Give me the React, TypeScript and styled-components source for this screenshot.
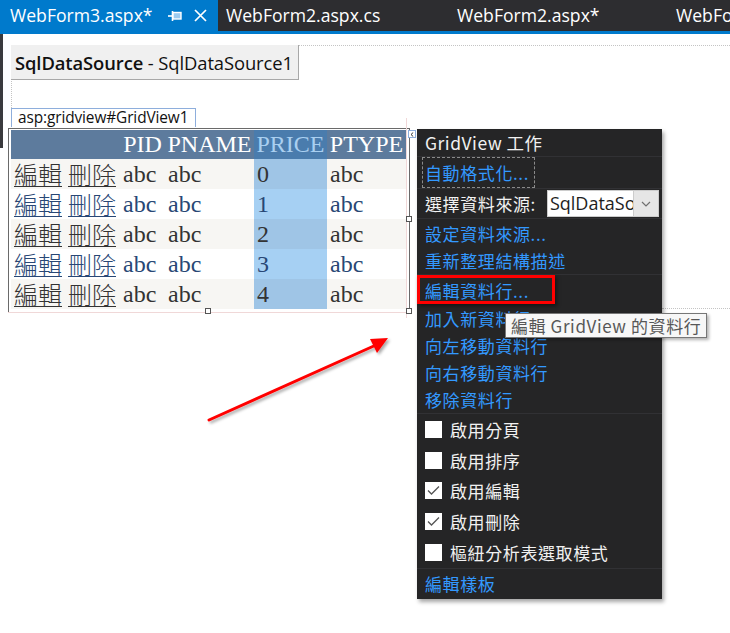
import React from "react";
import styled, { createGlobalStyle } from "styled-components";

const GlobalStyle = createGlobalStyle`
  html, body { margin: 0; padding: 0; background: #ffffff; }
  body { width: 730px; height: 633px; overflow: hidden; font-family: "Noto Sans", "Noto Sans CJK TC", sans-serif; }
`;

const Page = styled.div`
  position: relative;
  width: 730px;
  height: 633px;
  overflow: hidden;
  background: #ffffff;
  display: flex;
  flex-direction: column;
`;

const TabBar = styled.div`
  height: 31px;
  flex-shrink: 0;
  background: #2d2d30;
  border-bottom: 3px solid #007acc;
  display: flex;
`;

const Tab = styled.div<{ $active?: boolean; $width: number; $pad: number }>`
  width: ${(p) => p.$width}px;
  flex-shrink: 0;
  box-sizing: border-box;
  padding-left: ${(p) => p.$pad}px;
  display: flex;
  align-items: center;
  background: ${(p) => (p.$active ? "#007acc" : "transparent")};
  color: #ffffff;
  font-family: "Open Sans", "Noto Sans", sans-serif;
  font-size: 17.6px;
  white-space: nowrap;
  overflow: hidden;
`;

const TabTitle = styled.span`
  line-height: 31px;
`;

const TabIcon = styled.svg<{ $ml: number }>`
  margin-left: ${(p) => p.$ml}px;
  flex-shrink: 0;
`;

const Surface = styled.div`
  flex: 1;
  display: flex;
  flex-direction: column;
  align-items: flex-start;
  position: relative;
`;

const EdgeStrip = styled.div`
  position: absolute;
  left: 0;
  top: 0;
  width: 3px;
  height: 114px;
  background: #3a3a3d;
`;

const DesignArea = styled.div`
  margin: 11px 0 0 11px;
  width: 718px;
  height: 62px;
  border-top: 1px dotted #c4c4c4;
  border-left: 1px dotted #c4c4c4;
`;

const DataSourceBox = styled.div`
  margin: -1px 0 0 -1px;
  width: 288px;
  height: 35px;
  box-sizing: border-box;
  background: #f0f0f0;
  border-right: 1px solid #a8a8a8;
  border-bottom: 1px solid #a8a8a8;
  padding-left: 4px;
  display: flex;
  align-items: center;
  font-family: "Open Sans", "Noto Sans", sans-serif;
  font-size: 18.4px;
  letter-spacing: -0.1px;
  color: #111;
  white-space: nowrap;
`;

const Bold = styled.b`
  font-weight: 600;
`;

const GridTag = styled.div`
  margin-left: 11px;
  width: 185px;
  height: 19px;
  box-sizing: border-box;
  border: 1px solid #8eaedc;
  border-bottom: none;
  background: #ffffff;
  padding-left: 6px;
  font-family: "Open Sans", "Noto Sans", sans-serif;
  font-size: 15.4px;
  line-height: 18px;
  letter-spacing: -0.1px;
  color: #111;
  white-space: nowrap;
`;

const GridFrame = styled.div`
  margin: 1px 0 0 8px;
  width: 402px;
  height: 185px;
  box-sizing: border-box;
  border: 1px solid #6a6a6a;
  padding: 1px 2px 0 2px;
`;

const Table = styled.table`
  border-collapse: collapse;
  width: 395px;
  table-layout: fixed;
  font-family: "Liberation Serif", "Noto Sans CJK TC", serif;
  font-size: 24px;
`;

const HeadCell = styled.th<{ $sel?: boolean }>`
  height: 29px;
  padding: 0;
  font-weight: 400;
  color: ${(p) => (p.$sel ? "#a9cff0" : "#ffffff")};
  background: ${(p) => (p.$sel ? "#4a7cad" : "#5d7b9d")};
  text-align: center;
  line-height: 29px;
  white-space: nowrap;
  overflow: hidden;
`;

const Row = styled.tr<{ $alt?: boolean }>`
  background: ${(p) => (p.$alt ? "#ffffff" : "#f7f6f3")};
  color: ${(p) => (p.$alt ? "#284775" : "#333333")};
`;

const Cell = styled.td<{ $sel?: boolean; $alt?: boolean }>`
  padding: 0;
  background: ${(p) => (p.$sel ? (p.$alt ? "#a6d0f3" : "#9fc5e6") : "transparent")};
`;

const CellBox = styled.div`
  height: 30px;
  padding-left: 3px;
  display: flex;
  align-items: center;
  gap: 6px;
  white-space: nowrap;
  overflow: hidden;
`;

const CmdLink = styled.span`
  display: block;
  height: 28px;
  text-decoration: underline;
  text-decoration-thickness: 1px;
  text-underline-offset: 2px;
  font-family: "Noto Sans CJK TC", sans-serif;
  font-weight: 300;
  line-height: 28px;
`;

const Panel = styled.div`
  position: absolute;
  left: 417px;
  top: 129px;
  width: 245px;
  height: 470px;
  box-sizing: border-box;
  background: #252526;
  box-shadow: 2px 3px 4px rgba(0, 0, 0, 0.35);
  font-family: "Noto Sans CJK TC", sans-serif;
  font-size: 17px;
  letter-spacing: 0.6px;
  display: flex;
  flex-direction: column;
`;

const PanelTitle = styled.div`
  height: 27px;
  padding-left: 8px;
  display: flex;
  align-items: center;
  color: #f1f1f1;
  font-size: 17.5px;
  letter-spacing: 0.5px;
  border-bottom: 1px solid #313134;
`;

const Group = styled.div<{ $last?: boolean }>`
  display: flex;
  flex-direction: column;
  border-bottom: ${(p) => (p.$last ? "none" : "1px solid #313134")};
`;

const Item = styled.div<{ $h: number }>`
  height: ${(p) => p.$h}px;
  padding-left: 8px;
  display: flex;
  align-items: center;
  color: #f1f1f1;
  white-space: nowrap;
`;

const LinkText = styled.span<{ $focus?: boolean; $under?: boolean }>`
  color: #3399ff;
  text-decoration: ${(p) => (p.$under ? "underline" : "none")};
  text-underline-offset: 3px;
  outline: ${(p) => (p.$focus ? "1px dashed #8a8a8a" : "none")};
  outline-offset: ${(p) => (p.$focus ? "2px" : "0")};
  padding-right: ${(p) => (p.$focus ? "3px" : "0")};
`;

const Combo = styled.div`
  margin-left: 11px;
  width: 112px;
  height: 27px;
  box-sizing: border-box;
  background: #ffffff;
  border: 1px solid #cccccc;
  display: flex;
  overflow: hidden;
`;

const ComboText = styled.div`
  flex: 1;
  overflow: hidden;
  color: #1e1e1e;
  padding-left: 2px;
  line-height: 25px;
  font-size: 18px;
  letter-spacing: 0;
  font-family: "Open Sans", "Noto Sans", sans-serif;
`;

const ComboButton = styled.div`
  width: 24px;
  flex-shrink: 0;
  background: #e6e6e6;
  border-left: 1px solid #cccccc;
  display: flex;
  align-items: center;
  justify-content: center;
`;

const CheckBox = styled.div`
  width: 17px;
  height: 17px;
  background: #ffffff;
  margin-right: 8px;
  display: flex;
  align-items: center;
  justify-content: center;
  flex-shrink: 0;
`;

const RedBox = styled.div`
  position: absolute;
  left: 417px;
  top: 275px;
  width: 138px;
  height: 29px;
  box-sizing: border-box;
  border: 3px solid #ff0000;
  box-shadow: 2px 2px 4px rgba(0, 0, 0, 0.45);
`;

const Tooltip = styled.div`
  position: absolute;
  left: 505px;
  top: 313px;
  width: 202px;
  height: 25px;
  box-sizing: border-box;
  background: #f7f7f7;
  border: 1px solid #777777;
  box-shadow: 2px 2px 3px rgba(0, 0, 0, 0.3);
  padding-left: 5px;
  display: flex;
  align-items: center;
  font-family: "Noto Sans CJK TC", sans-serif;
  font-size: 17px;
  letter-spacing: 0.6px;
  color: #575757;
  white-space: nowrap;
`;

const Handle = styled.div<{ $x: number; $y: number }>`
  position: absolute;
  left: ${(p) => p.$x - 3}px;
  top: ${(p) => p.$y - 3}px;
  width: 6px;
  height: 6px;
  box-sizing: border-box;
  background: #ffffff;
  border: 1px solid #555555;
`;

const SmartTag = styled.div`
  position: absolute;
  left: 408px;
  top: 130px;
  width: 8px;
  height: 8px;
  box-sizing: border-box;
  background: #ffffff;
  border: 1px solid #8eaedc;
  display: flex;
  align-items: center;
  justify-content: center;
`;

const GuideV = styled.div<{ $x: number; $y: number; $h: number }>`
  position: absolute;
  left: ${(p) => p.$x}px;
  top: ${(p) => p.$y}px;
  width: 1px;
  height: ${(p) => p.$h}px;
  background: #f0d8d8;
`;

const GuideH = styled.div<{ $x: number; $y: number; $w: number; $dotted?: boolean }>`
  position: absolute;
  left: ${(p) => p.$x}px;
  top: ${(p) => p.$y}px;
  width: ${(p) => p.$w}px;
  height: 0;
  border-top: 1px ${(p) => (p.$dotted ? "dotted #c4c4c4" : "solid #f0d8d8")};
`;

const ArrowSvg = styled.svg`
  position: absolute;
  left: 200px;
  top: 325px;
  overflow: visible;
`;

const Check = () => (
  <svg width="13" height="11" viewBox="0 0 13 11">
    <path d="M1 5.5 L4.5 9 L12 1.5" fill="none" stroke="#555" strokeWidth="1.3" />
  </svg>
);

const rows = [0, 1, 2, 3, 4];

export default function App() {
  return (
    <Page>
      <GlobalStyle />
      <TabBar>
        <Tab $active $width={218} $pad={10}>
          <TabTitle>WebForm3.aspx*</TabTitle>
          <TabIcon $ml={15} width="14" height="12" viewBox="0 0 14 12">
            <path d="M0 6 H4" stroke="#fff" strokeWidth="1.6" />
            <path d="M4.5 1 V11" stroke="#fff" strokeWidth="1.6" />
            <rect x="5" y="2.5" width="8" height="6.5" fill="#9ccbf0" stroke="#fff" strokeWidth="1.4" />
          </TabIcon>
          <TabIcon $ml={12} width="13" height="13" viewBox="0 0 13 13">
            <path d="M1 1 L12 12 M12 1 L1 12" stroke="#fff" strokeWidth="1.7" />
          </TabIcon>
        </Tab>
        <Tab $width={231} $pad={8}>
          <TabTitle>WebForm2.aspx.cs</TabTitle>
        </Tab>
        <Tab $width={219} $pad={8}>
          <TabTitle>WebForm2.aspx*</TabTitle>
        </Tab>
        <Tab $width={62} $pad={8}>
          <TabTitle>WebForm1.aspx</TabTitle>
        </Tab>
      </TabBar>
      <Surface>
        <EdgeStrip />
        <DesignArea>
          <DataSourceBox>
            <Bold>SqlDataSource</Bold>&nbsp;- SqlDataSource1
          </DataSourceBox>
        </DesignArea>
        <GridTag>asp:gridview#GridView1</GridTag>
        <GridFrame>
          <Table>
            <colgroup>
              <col style={{ width: 109 }} />
              <col style={{ width: 45 }} />
              <col style={{ width: 89 }} />
              <col style={{ width: 73 }} />
              <col style={{ width: 79 }} />
            </colgroup>
            <thead>
              <tr>
                <HeadCell>&nbsp;</HeadCell>
                <HeadCell>PID</HeadCell>
                <HeadCell>PNAME</HeadCell>
                <HeadCell $sel>PRICE</HeadCell>
                <HeadCell>PTYPE</HeadCell>
              </tr>
            </thead>
            <tbody>
              {rows.map((n) => {
                const alt = n % 2 === 1;
                return (
                  <Row key={n} $alt={alt}>
                    <Cell>
                      <CellBox>
                        <CmdLink>編輯</CmdLink>
                        <CmdLink>刪除</CmdLink>
                      </CellBox>
                    </Cell>
                    <Cell>
                      <CellBox>abc</CellBox>
                    </Cell>
                    <Cell>
                      <CellBox>abc</CellBox>
                    </Cell>
                    <Cell $sel $alt={alt}>
                      <CellBox>{n}</CellBox>
                    </Cell>
                    <Cell>
                      <CellBox>abc</CellBox>
                    </Cell>
                  </Row>
                );
              })}
            </tbody>
          </Table>
        </GridFrame>
      </Surface>

      <GuideV $x={406} $y={118} $h={200} />
      <GuideH $x={8} $y={312} $w={402} />
      <GuideH $x={662} $y={308} $w={68} $dotted />

      <SmartTag>
        <svg width="4" height="5" viewBox="0 0 4 5">
          <path d="M3.2 0.5 L1 2.5 L3.2 4.5" fill="none" stroke="#333" strokeWidth="1" />
        </svg>
      </SmartTag>
      <Handle $x={409} $y={219} />
      <Handle $x={208} $y={311} />
      <Handle $x={409} $y={311} />

      <Panel>
        <PanelTitle>GridView 工作</PanelTitle>
        <Group>
          <Item $h={31}>
            <LinkText $focus>自動格式化...</LinkText>
          </Item>
        </Group>
        <Group>
          <Item $h={29}>
            選擇資料來源:
            <Combo>
              <ComboText>SqlDataSource1</ComboText>
              <ComboButton>
                <svg width="10" height="6" viewBox="0 0 10 6">
                  <path d="M1 1 L5 5 L9 1" fill="none" stroke="#707070" strokeWidth="1.2" />
                </svg>
              </ComboButton>
            </Combo>
          </Item>
        </Group>
        <Group>
          <Item $h={28}>
            <LinkText>設定資料來源...</LinkText>
          </Item>
          <Item $h={27}>
            <LinkText>重新整理結構描述</LinkText>
          </Item>
        </Group>
        <Group>
          <Item $h={30}>
            <LinkText $under>編輯資料行...</LinkText>
          </Item>
          <Item $h={27}>
            <LinkText>加入新資料行</LinkText>
          </Item>
          <Item $h={27}>
            <LinkText>向左移動資料行</LinkText>
          </Item>
          <Item $h={27}>
            <LinkText>向右移動資料行</LinkText>
          </Item>
          <Item $h={27}>
            <LinkText>移除資料行</LinkText>
          </Item>
        </Group>
        <Group>
          <Item $h={31}>
            <CheckBox />
            啟用分頁
          </Item>
          <Item $h={30}>
            <CheckBox />
            啟用排序
          </Item>
          <Item $h={31}>
            <CheckBox>
              <Check />
            </CheckBox>
            啟用編輯
          </Item>
          <Item $h={30}>
            <CheckBox>
              <Check />
            </CheckBox>
            啟用刪除
          </Item>
          <Item $h={32}>
            <CheckBox />
            樞紐分析表選取模式
          </Item>
        </Group>
        <Group $last>
          <Item $h={29}>
            <LinkText>編輯樣板</LinkText>
          </Item>
        </Group>
      </Panel>

      <RedBox />
      <Tooltip>編輯 GridView 的資料行</Tooltip>

      <ArrowSvg width="200" height="110" viewBox="0 0 200 110">
        <defs>
          <filter id="sh" x="-20%" y="-20%" width="140%" height="140%">
            <feDropShadow dx="2" dy="2" stdDeviation="1.5" floodColor="#000" floodOpacity="0.35" />
          </filter>
        </defs>
        <g filter="url(#sh)">
          <path d="M9 95 L176 20" stroke="#ff0000" strokeWidth="3" strokeLinecap="round" />
          <path d="M188 13 L170 14 L177 28 Z" fill="#ff0000" />
        </g>
      </ArrowSvg>
    </Page>
  );
}
